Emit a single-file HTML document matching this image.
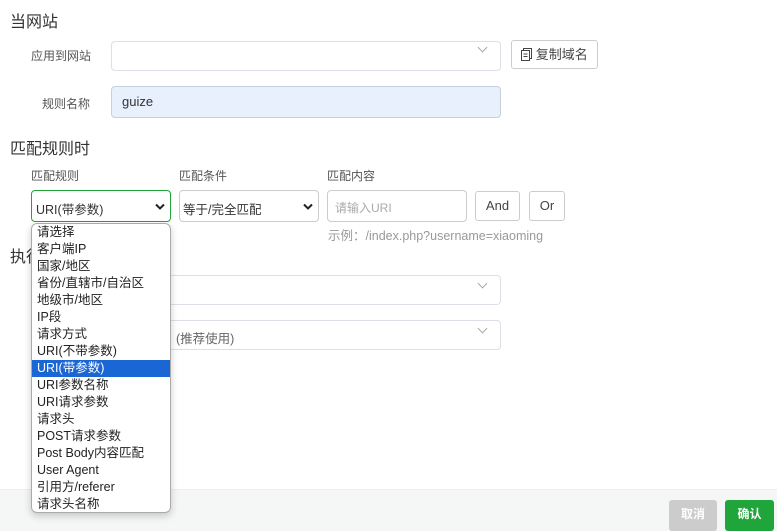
<!DOCTYPE html>
<html><head><meta charset="utf-8"><style>
*{box-sizing:border-box;margin:0;padding:0}
body{width:777px;height:531px;position:relative;overflow:hidden;background:#fff;font-family:"Liberation Sans","Noto Sans CJK SC",sans-serif;color:#333;font-size:12px}
.a{position:absolute}
.h{font-size:16px;color:#333}
.lbl{font-size:12px;color:#555}
.inp{position:absolute;border:1px solid #dcdfe6;border-radius:4px;background:#fff}
.chev{position:absolute;width:8px;height:8px;border-right:1px solid #aaa;border-bottom:1px solid #aaa;transform:rotate(45deg)}
.btn{position:absolute;border:1px solid #ccc;border-radius:3px;background:#fff;font-size:13px;color:#444;text-align:center}
.list{position:absolute;left:31px;top:223px;width:140px;height:290px;border:1px solid #aaa;border-radius:6px;background:#fff;box-shadow:0 3px 8px rgba(0,0,0,.2);overflow:hidden}
.list div{height:17px;line-height:17px;padding-left:5px;font-size:12.5px;color:#222}
.list .sel{background:#1a66d5;color:#fff}
</style></head><body>
<div class="a h" style="left:10px;top:8px">当网站</div>
<div class="a lbl" style="left:31px;top:47px">应用到网站</div>
<div class="inp" style="left:111px;top:41px;width:390px;height:30px"></div>
<div class="chev" style="left:479px;top:44px;width:7px;height:7px"></div>
<div class="btn" style="left:511px;top:40px;width:87px;height:29px;line-height:27px">
<svg width="11" height="13" viewBox="0 0 11 13" style="vertical-align:-2px"><rect x="2.5" y="0.5" width="8" height="10" fill="none" stroke="#444"/><rect x="0.5" y="2.5" width="8" height="10" fill="#fff" stroke="#444"/><path d="M2.5 6h4M2.5 8.5h4" stroke="#444"/></svg> 复制域名</div>
<div class="a lbl" style="left:42px;top:95px">规则名称</div>
<div class="inp" style="left:111px;top:86px;width:390px;height:32px;background:#e8f0fe;border-color:#c8d0dc"></div>
<div class="a" style="left:122px;top:94px;font-size:13px;color:#333">guize</div>
<div class="a h" style="left:10px;top:135px">匹配规则时</div>
<div class="a lbl" style="left:31px;top:167px">匹配规则</div>
<div class="a lbl" style="left:179px;top:167px">匹配条件</div>
<div class="a lbl" style="left:327px;top:167px">匹配内容</div>
<div class="inp" style="left:31px;top:190px;width:140px;height:32px;border-color:#20a53a"></div>
<div class="a" style="left:36px;top:199px;font-size:12.5px;color:#333">URI(带参数)</div>
<svg class="a" style="left:155px;top:203px" width="10" height="7" viewBox="0 0 10 7"><path d="M1 1.5l4 4 4-4" fill="none" stroke="#222" stroke-width="2"/></svg>
<div class="inp" style="left:179px;top:190px;width:140px;height:32px;border-color:#ccc"></div>
<div class="a" style="left:183px;top:199px;font-size:12.5px;color:#333">等于/完全匹配</div>
<svg class="a" style="left:303px;top:203px" width="10" height="7" viewBox="0 0 10 7"><path d="M1 1.5l4 4 4-4" fill="none" stroke="#222" stroke-width="2"/></svg>
<div class="inp" style="left:327px;top:190px;width:140px;height:32px;border-color:#ccc"></div>
<div class="a" style="left:335px;top:199px;font-size:12px;color:#aaa">请输入URI</div>
<div class="btn" style="left:475px;top:191px;width:45px;height:30px;line-height:28px">And</div>
<div class="btn" style="left:529px;top:191px;width:36px;height:30px;line-height:28px">Or</div>
<div class="a" style="left:328px;top:225px;font-size:12.5px;color:#999">示例：/index.php?username=xiaoming</div>
<div class="a h" style="left:10px;top:243px">执行</div>
<div class="inp" style="left:111px;top:275px;width:390px;height:30px"></div>
<div class="chev" style="left:479px;top:280px;width:7px;height:7px"></div>
<div class="inp" style="left:111px;top:320px;width:390px;height:30px"></div>
<div class="chev" style="left:479px;top:325px;width:7px;height:7px"></div>
<div class="a" style="left:176px;top:328px;font-size:12.5px;color:#666">(推荐使用)</div>
<div class="a" style="left:0;top:489px;width:777px;height:42px;background:#f5f6f6;border-top:1px solid #eee"></div>
<div class="a" style="left:669px;top:500px;width:48px;height:31px;background:#ccc;border-radius:3px;color:#fff;font-weight:bold;text-align:center;line-height:29px;font-size:12px">取消</div>
<div class="a" style="left:725px;top:500px;width:49px;height:31px;background:#20a53a;border-radius:3px;color:#fff;font-weight:bold;text-align:center;line-height:29px;font-size:12px">确认</div>
<div class="list">
<div>请选择</div><div>客户端IP</div><div>国家/地区</div><div>省份/直辖市/自治区</div><div>地级市/地区</div><div>IP段</div><div>请求方式</div><div>URI(不带参数)</div><div class="sel">URI(带参数)</div><div>URI参数名称</div><div>URI请求参数</div><div>请求头</div><div>POST请求参数</div><div>Post Body内容匹配</div><div>User Agent</div><div>引用方/referer</div><div>请求头名称</div>
</div>
</body></html>
